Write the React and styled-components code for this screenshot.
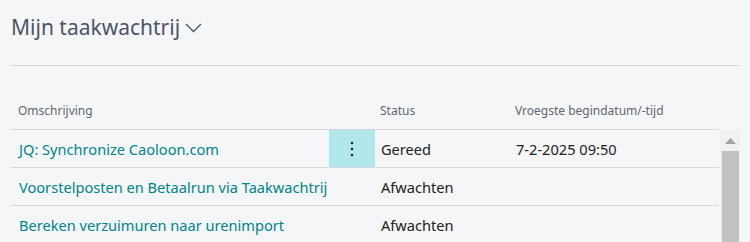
import React from 'react';
import styled, { createGlobalStyle } from 'styled-components';

const GlobalStyle = createGlobalStyle`
  html, body {
    margin: 0;
    padding: 0;
    background: #f5f6f8;
  }
  body {
    font-family: "Noto Sans", "Open Sans", sans-serif;
  }
`;

const Page = styled.div`
  width: 750px;
  height: 242px;
  overflow: hidden;
  background: #f5f6f8;
  padding: 0 10px 0 11px;
  box-sizing: border-box;
`;

const TitleBar = styled.div`
  height: 66px;
  display: flex;
  align-items: flex-start;
  padding-top: 13px;
  box-sizing: border-box;
  border-bottom: 1px solid #d6d6d6;
`;

const Title = styled.h1`
  margin: 0;
  font-size: 21px;
  font-weight: 400;
  color: #4b5566;
  line-height: 28px;
  display: flex;
  align-items: center;
  gap: 4px;
`;

const Body = styled.div`
  display: flex;
  padding-top: 29px;
`;

const Table = styled.div`
  flex: 1;
`;

const Row = styled.div`
  display: grid;
  grid-template-columns: 318px 46px 135px 1fr;
  height: ${(p) => (p.header ? '35px' : '38px')};
  border-bottom: 1px solid #d5d8dc;
  box-sizing: border-box;
`;

const HeadCell = styled.div`
  font-size: 12px;
  color: #5f6670;
  display: flex;
  align-items: center;
  padding-left: ${(p) => p.pad || '7px'};
  padding-bottom: 3px;
`;

const Cell = styled.div`
  font-size: 14.6px;
  color: ${(p) => (p.link ? '#008489' : '#212121')};
  display: flex;
  align-items: center;
  padding-left: ${(p) => p.pad || '8px'};
  white-space: nowrap;
`;

const MenuCell = styled.div`
  background: ${(p) => (p.active ? '#b2e8ec' : 'transparent')};
  display: flex;
  align-items: center;
  justify-content: center;
`;

const Scrollbar = styled.div`
  width: 20px;
  margin-left: 1px;
  margin-top: 35px;
  background: #f0f0f0;
  display: flex;
  flex-direction: column;
  align-items: center;
`;

const ScrollArrow = styled.div`
  height: 21px;
  display: flex;
  align-items: center;
  justify-content: center;
`;

const Thumb = styled.div`
  width: 17px;
  flex: 1;
  min-height: 120px;
  background: #c1c1c1;
`;

const Chevron = () => (
  <svg width="19" height="18" viewBox="0 0 19 18" fill="none">
    <path d="M2 6 L9.5 13.5 L17 6" stroke="#4b5566" strokeWidth="1.3" />
  </svg>
);

const Dots = () => (
  <svg width="4" height="16" viewBox="0 0 4 16">
    <circle cx="2" cy="2" r="1.3" fill="#1b2a3a" />
    <circle cx="2" cy="8" r="1.3" fill="#1b2a3a" />
    <circle cx="2" cy="14" r="1.3" fill="#1b2a3a" />
  </svg>
);

const rows = [
  { desc: 'JQ: Synchronize Caoloon.com', status: 'Gereed', date: '7-2-2025 09:50', active: true },
  { desc: 'Voorstelposten en Betaalrun via Taakwachtrij', status: 'Afwachten', date: '' },
  { desc: 'Bereken verzuimuren naar urenimport', status: 'Afwachten', date: '' },
];

export default function App() {
  return (
    <Page>
      <GlobalStyle />
      <TitleBar>
        <Title>
          Mijn taakwachtrij
          <Chevron />
        </Title>
      </TitleBar>
      <Body>
        <Table>
          <Row header>
            <HeadCell>Omschrijving</HeadCell>
            <HeadCell />
            <HeadCell pad="5px">Status</HeadCell>
            <HeadCell pad="5px">Vroegste begindatum/-tijd</HeadCell>
          </Row>
          {rows.map((r) => (
            <Row key={r.desc}>
              <Cell link>{r.desc}</Cell>
              <MenuCell active={r.active}>{r.active && <Dots />}</MenuCell>
              <Cell pad="6px">{r.status}</Cell>
              <Cell pad="6px">{r.date}</Cell>
            </Row>
          ))}
        </Table>
        <Scrollbar>
          <ScrollArrow>
            <svg width="11" height="6" viewBox="0 0 11 6">
              <path d="M0 6 L5.5 0 L11 6 Z" fill="#a3a3a3" />
            </svg>
          </ScrollArrow>
          <Thumb />
        </Scrollbar>
      </Body>
    </Page>
  );
}
